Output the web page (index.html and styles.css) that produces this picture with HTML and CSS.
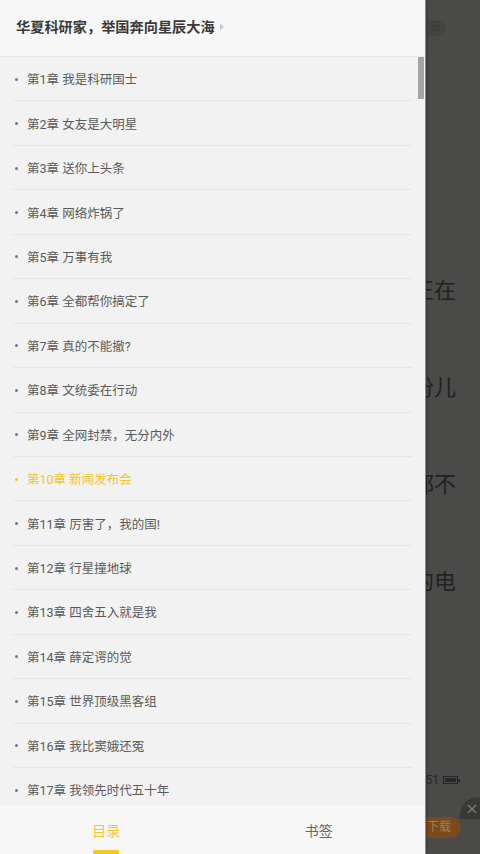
FILE: index.html
```html
<!DOCTYPE html>
<html lang="zh">
<head>
<meta charset="utf-8">
<title>目录</title>
<link rel="stylesheet" href="styles.css">
</head>
<body>
<div class="screen">
  <div class="reader">
    <div class="reader-top"><span class="coin-pill">币</span></div>
    <div class="reader-text">
      <div class="rline">他们一直在为此事而努力工作着，现在正在</div>
      <div class="rline">每个人都明白自己该做的那一份儿</div>
      <div class="rline">无论如何这件事情谁都不</div>
      <div class="rline">这时候他口袋里的电</div>
    </div>
    <div class="reader-status">
      <span class="time">51</span>
      <span class="battery"><span class="battery-fill"></span></span>
    </div>
    <div class="reader-ad">
      <span class="ad-btn">立下载</span>
    </div>
    <span class="ad-close">
      <svg width="12" height="12" viewBox="0 0 12 12"><path d="M2 2L10 10M10 2L2 10" stroke="#7a7a78" stroke-width="1.4" fill="none"/></svg>
    </span>
  </div>

  <aside class="drawer">
    <header class="drawer-head">
      <h1 class="book-title">华夏科研家，举国奔向星辰大海</h1>
      <span class="head-arrow"></span>
    </header>
    <div class="chapter-list">
      <ul class="chapters">
        <li class="chapter">第1章 我是科研国士</li>
        <li class="chapter">第2章 女友是大明星</li>
        <li class="chapter">第3章 送你上头条</li>
        <li class="chapter">第4章 网络炸锅了</li>
        <li class="chapter">第5章 万事有我</li>
        <li class="chapter">第6章 全都帮你搞定了</li>
        <li class="chapter">第7章 真的不能撤?</li>
        <li class="chapter">第8章 文统委在行动</li>
        <li class="chapter">第9章 全网封禁，无分内外</li>
        <li class="chapter active">第10章 新闻发布会</li>
        <li class="chapter">第11章 厉害了，我的国!</li>
        <li class="chapter">第12章 行星撞地球</li>
        <li class="chapter">第13章 四舍五入就是我</li>
        <li class="chapter">第14章 薛定谔的觉</li>
        <li class="chapter">第15章 世界顶级黑客组</li>
        <li class="chapter">第16章 我比窦娥还冤</li>
        <li class="chapter">第17章 我领先时代五十年</li>
        <li class="chapter">第18章 科研国士</li>
      </ul>
      <span class="scroll-thumb"></span>
    </div>
    <nav class="tabs">
      <div class="tab active"><span class="tab-label">目录</span><span class="tab-bar"></span></div>
      <div class="tab"><span class="tab-label">书签</span><span class="tab-bar"></span></div>
    </nav>
  </aside>
</div>
</body>
</html>
```

FILE: styles.css
```css
* { box-sizing: border-box; }
html, body { margin: 0; padding: 0; }
body {
  width: 480px;
  height: 854px;
  overflow: hidden;
  font-family: Roboto, "Noto Sans CJK SC", sans-serif;
}
.screen {
  position: relative;
  width: 480px;
  height: 854px;
  overflow: hidden;
}

/* background reading page (dimmed) */
.reader {
  height: 854px;
  background: #4a4a48;
  display: flex;
  flex-direction: column;
}
.reader-top {
  height: 56px;
  display: flex;
  justify-content: flex-end;
  align-items: flex-start;
  padding: 20px 35px 0 0;
}
.coin-pill {
  width: 60px;
  height: 16px;
  border-radius: 8px;
  background: #444442;
  color: #3a3a38;
  font-size: 11px;
  line-height: 16px;
  text-align: right;
  padding-right: 4px;
}
.reader-text {
  padding-top: 224px;
}
.rline {
  height: 97px;
  line-height: 22px;
  font-size: 22px;
  color: #222220;
  text-align: right;
  white-space: nowrap;
  overflow: hidden;
  padding-right: 24px;
}
.reader-status {
  margin-top: auto;
  height: 18px;
  display: flex;
  align-items: center;
  justify-content: flex-end;
  gap: 4px;
  padding-right: 22px;
  margin-bottom: 6px;
}
.time {
  font-size: 12px;
  color: #262626;
}
.battery {
  position: relative;
  width: 15px;
  height: 8px;
  border: 1px solid #262626;
  padding: 1px;
}
.battery::after {
  content: "";
  position: absolute;
  right: -3px;
  top: 2px;
  width: 2px;
  height: 3px;
  background: #262626;
}
.battery-fill {
  display: block;
  width: 100%;
  height: 100%;
  background: #262626;
}
.reader-ad {
  height: 59px;
  display: flex;
  justify-content: flex-end;
  align-items: flex-start;
  padding: 22px 19px 0 0;
}
.ad-btn {
  width: 80px;
  height: 21px;
  border-radius: 11px;
  background: #7b4a1c;
  color: #a77a52;
  font-size: 12px;
  line-height: 21px;
  text-align: right;
  padding-right: 10px;
}
.ad-close {
  position: absolute;
  right: -16px;
  top: 797px;
  width: 36px;
  height: 22px;
  border-radius: 18px 18px 0 0;
  background: #393938;
  display: flex;
  align-items: center;
  padding-left: 6px;
  padding-top: 2px;
}

/* drawer */
.drawer {
  position: absolute;
  left: 0;
  top: 0;
  bottom: 0;
  width: 425px;
  display: flex;
  flex-direction: column;
  background: #f2f2f2;
  box-shadow: 1px 0 0 #8a8a88, 2px 0 3px rgba(0,0,0,0.25);
}
.drawer-head {
  height: 57px;
  flex: none;
  background: #f7f7f7;
  border-bottom: 1px solid #e7e7e7;
  display: flex;
  align-items: center;
  padding: 0 0 2px 16px;
}
.book-title {
  margin: 0;
  font-size: 14.2px;
  font-weight: bold;
  color: #3a3a3a;
  line-height: 20px;
}
.head-arrow {
  width: 0;
  height: 0;
  margin-left: 5px;
  border-top: 3.5px solid transparent;
  border-bottom: 3.5px solid transparent;
  border-left: 4px solid #c4c4c4;
}
.chapter-list {
  flex: 1;
  position: relative;
  overflow: hidden;
}
.chapters {
  list-style: none;
  margin: 0;
  padding: 0;
}
.chapter {
  height: 44.44px;
  margin: 0 13px;
  border-bottom: 1px solid #e6e6e6;
  display: flex;
  align-items: center;
  padding-left: 14px;
  position: relative;
  font-size: 12.5px;
  color: #5a5a5a;
}
.chapter::before {
  content: "";
  position: absolute;
  left: 2px;
  top: 50%;
  width: 3px;
  height: 3px;
  margin-top: -1px;
  border-radius: 50%;
  background: #777777;
}
.chapter.active { color: #f5c322; }
.chapter.active::before { background: #f5c322; }
.scroll-thumb {
  position: absolute;
  right: 1px;
  top: 0;
  width: 6px;
  height: 42px;
  background: #a4a4a4;
}
.tabs {
  flex: none;
  height: 49px;
  background: #f7f7f7;
  display: flex;
}
.tab {
  flex: 1;
  display: flex;
  flex-direction: column;
  align-items: center;
  padding-top: 5px;
}
.tab-label {
  flex: 1;
  display: flex;
  align-items: center;
  font-size: 14px;
  color: #666666;
}
.tab.active .tab-label { color: #f7c626; }
.tab-bar {
  width: 26px;
  height: 4px;
}
.tab.active .tab-bar { background: #f7c626; }
```
